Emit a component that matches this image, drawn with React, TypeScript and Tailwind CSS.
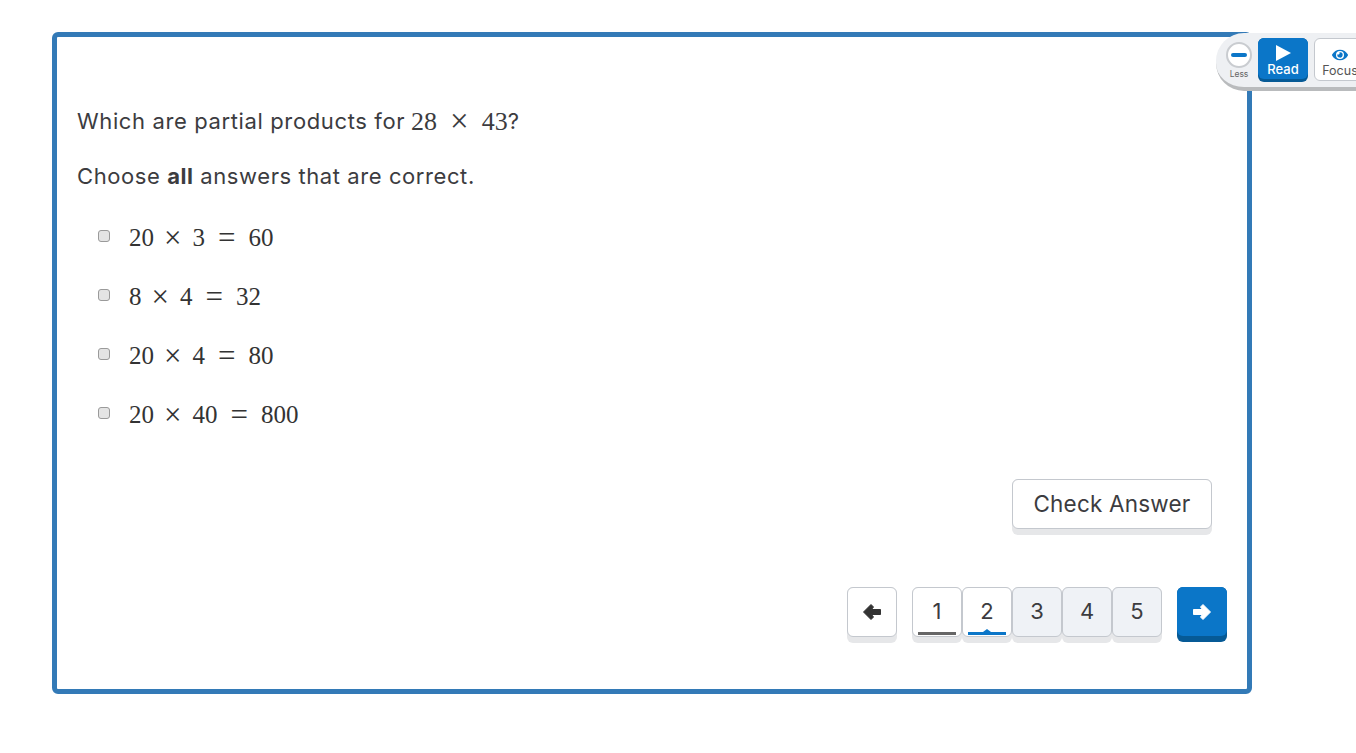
import { FaEye } from "react-icons/fa";

const answers = [
  ["20", "3", "60"],
  ["8", "4", "32"],
  ["20", "4", "80"],
  ["20", "40", "800"],
];

function Arrow({ flip }: { flip?: boolean }) {
  return (
    <svg
      width="20"
      height="18"
      viewBox="0 0 20 18"
      className={flip ? "rotate-180" : ""}
      fill="currentColor"
      stroke="currentColor"
      strokeWidth="1"
      strokeLinejoin="round"
    >
      <polygon points="9,1.5 1.5,9 9,16.5 11.5,14 9.5,11.5 18.5,11.5 18.5,6.5 9.5,6.5 11.5,4" />
    </svg>
  );
}

function Answer({ a, b, c }: { a: string; b: string; c: string }) {
  return (
    <div className="flex h-[59px] items-center">
      <input
        type="checkbox"
        className="mb-[2px] ml-[21px] h-3 w-3 appearance-none rounded-[3px] border border-[#9a9a9a] bg-[#e4e4e4]"
      />
      <span className="ml-[19px] mt-[2px] flex h-8 items-center font-['Liberation_Serif',serif] text-[25px] text-[#333]">
        <span>{a}</span>
        <span className="ml-[10px] text-[31px] leading-8">×</span>
        <span className="ml-[11px]">{b}</span>
        <span className="ml-[13px] text-[31px] leading-8">=</span>
        <span className="ml-[13px]">{c}</span>
      </span>
    </div>
  );
}

function PageButton({ n, state }: { n: number; state?: "visited" | "current" }) {
  return (
    <div className="relative h-14 w-[50px] rounded-md bg-[#e6e7e9]">
      <div
        className={`relative flex h-[50px] w-[50px] items-center justify-center rounded-md border border-[#c4c8ce] pb-[1px] text-[22px] text-[#3c3c3f] ${
          state ? "bg-white" : "bg-[#eff2f6]"
        }`}
      >
        {n}
        {state === "visited" && (
          <div className="absolute bottom-[1px] left-[5px] h-[3px] w-[38px] bg-[#666]" />
        )}
        {state === "current" && (
          <>
            <div className="absolute bottom-[1px] left-[5px] h-[3px] w-[38px] bg-[#0b76c8]" />
            <div className="absolute bottom-[4px] left-[20px] h-0 w-0 border-x-[4px] border-b-[3px] border-x-transparent border-b-[#0b76c8]" />
          </>
        )}
      </div>
    </div>
  );
}

export default function App() {
  return (
    <div className="relative h-[753px] w-[1356px] overflow-hidden bg-white pl-[52px] pt-8 font-['Inter',sans-serif] text-[#3c3c3f]">
      <div className="flex h-[662px] w-[1200px] flex-col rounded-md border-[5px] border-[#337ab7] pl-5 pr-5">
        <p className="mt-[63px] flex h-[42px] items-center text-[22px] tracking-[0.62px]">
          Which are partial products for
          <span className="ml-[6px] font-['Liberation_Serif',serif] text-[26px] tracking-normal">28</span>
          <span className="ml-[13px] font-['Liberation_Serif',serif] text-[33px] leading-[42px] tracking-normal">×</span>
          <span className="ml-[13px] font-['Liberation_Serif',serif] text-[26px] tracking-normal">43</span>
          ?
        </p>
        <p className="mt-[13px] h-[42px] text-[22px] leading-[42px] tracking-[0.58px]">
          Choose <b className="font-bold">all</b> answers that are correct.
        </p>
        <div className="mt-[10px]">
          {answers.map(([a, b, c]) => (
            <Answer key={a + b} a={a} b={b} c={c} />
          ))}
        </div>
        <div className="mt-[36px] flex justify-end pr-[15px]">
          <div className="h-14 w-[200px] rounded-md bg-[#e6e7e9]">
            <div className="flex h-[50px] items-center justify-center rounded-md border border-[#c4c8ce] bg-white text-[22.5px] tracking-[0.2px] text-[#3c3c3f]">
              Check Answer
            </div>
          </div>
        </div>
        <div className="mt-[52px] flex justify-end">
          <div className="mr-[15px] h-14 w-[50px] rounded-md bg-[#e6e7e9]">
            <div className="flex h-[50px] items-center justify-center rounded-md border border-[#c4c8ce] bg-white text-[#333]">
              <Arrow />
            </div>
          </div>
          <PageButton n={1} state="visited" />
          <PageButton n={2} state="current" />
          <PageButton n={3} />
          <PageButton n={4} />
          <PageButton n={5} />
          <div className="ml-[15px] h-[55px] w-[50px] rounded-md bg-[#065a96]">
            <div className="flex h-[49px] items-center justify-center rounded-md bg-[#0b76c8] text-white">
              <Arrow flip />
            </div>
          </div>
        </div>
      </div>

      {/* floating reader toolbar */}
      <div className="absolute left-[1216px] top-[33px] flex h-[58px] w-[160px] items-start rounded-l-[28px] border-b-[4px] border-[#b9bbbd] bg-[#eef0f3] pt-[5px]">
        <div className="ml-[10px] flex w-[26px] flex-col items-center">
          <div className="mt-[4px] flex h-[26px] w-[26px] items-center justify-center rounded-full border-2 border-[#c9ccd0] bg-white">
            <div className="h-[4px] w-[16px] rounded-sm bg-[#0b76c8]" />
          </div>
          <span className="mt-[1px] text-[8.5px] leading-[10px] text-[#666]">Less</span>
        </div>
        <div className="ml-[6px] h-11 w-[50px] rounded-md bg-[#065a96]">
          <div className="flex h-[41px] flex-col items-center rounded-md bg-[#0b76c8] pt-[7px] text-white">
            <svg width="15" height="16" viewBox="0 0 15 16" fill="currentColor">
              <polygon points="0,0 15,8 0,16" />
            </svg>
            <span className="text-[13px] font-medium leading-[16px]">Read</span>
          </div>
        </div>
        <div className="ml-[6px] flex h-[43px] w-[52px] flex-col items-center rounded-md border border-[#c4c8ce] bg-white pt-[8px]">
          <FaEye className="text-[16px] text-[#0b76c8]" />
          <span className="text-[12.5px] leading-[16px] text-[#555]">Focus</span>
        </div>
      </div>
    </div>
  );
}
